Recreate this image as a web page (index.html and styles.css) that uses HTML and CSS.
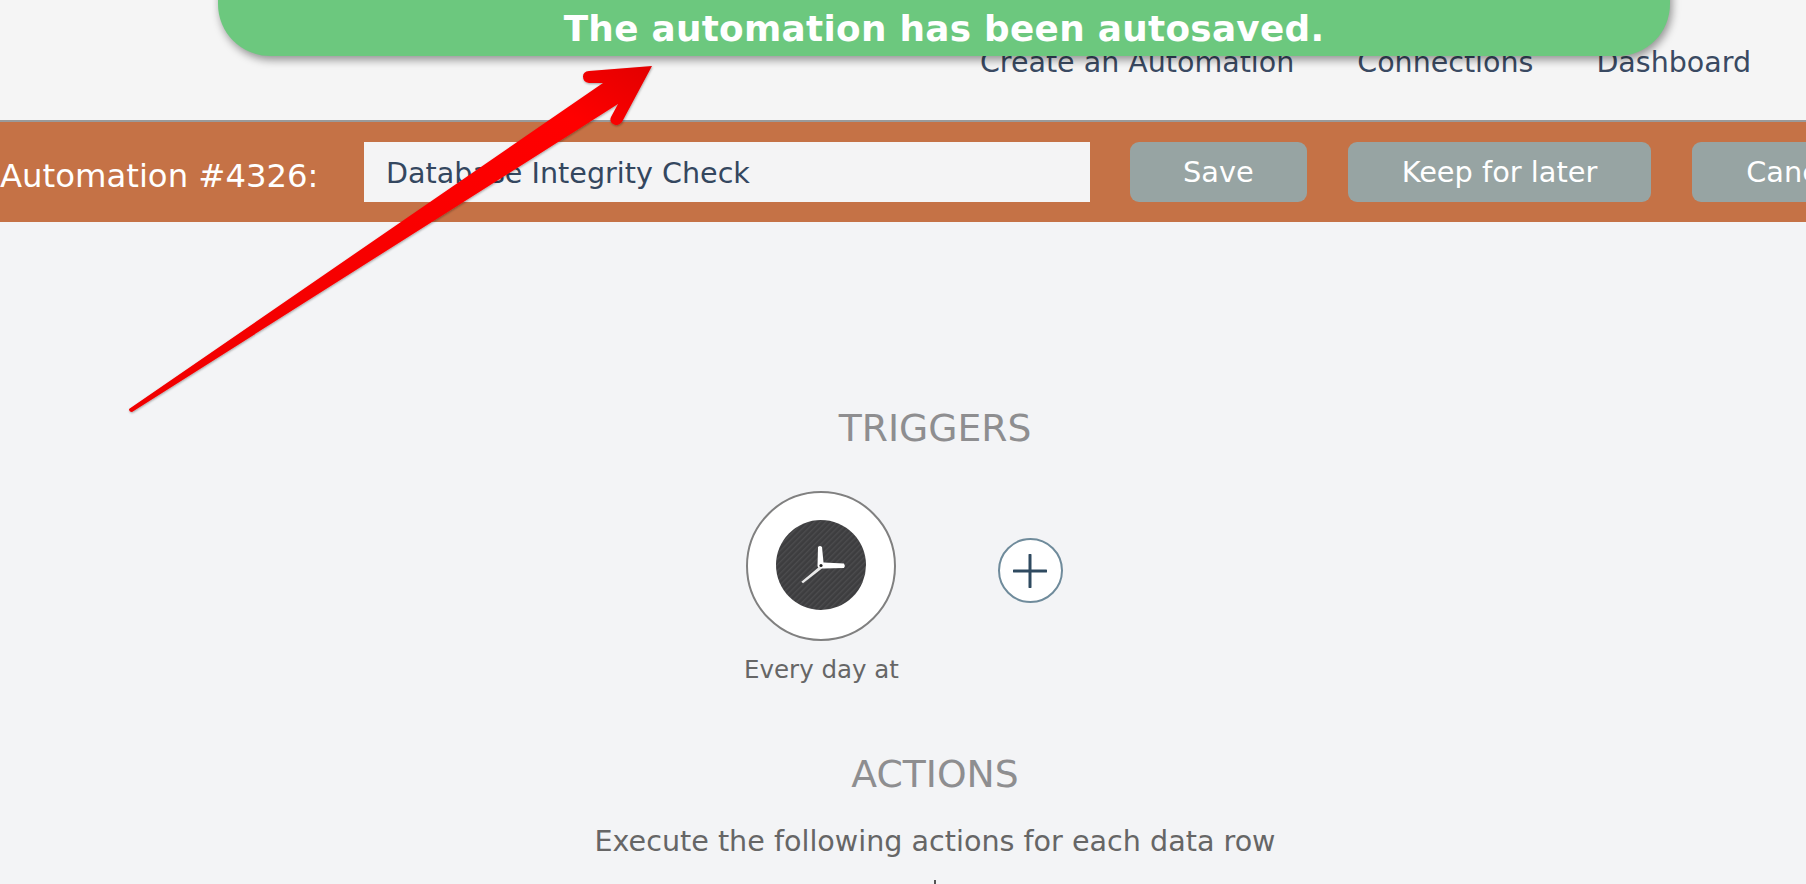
FILE: index.html
```html
<!DOCTYPE html>
<html lang="en">
<head>
  <meta charset="UTF-8" />
  <title>Automation #4326</title>
  <link rel="stylesheet" href="styles.css">
</head>
<body>
  <div class="toast">The automation has been autosaved.</div>

  <header class="topnav">
    <a href="#">Create an Automation</a>
    <a href="#">Connections</a>
    <a href="#">Dashboard</a>
  </header>

  <section class="namebar">
    <label class="namebar-label" for="name">Automation #4326:</label>
    <input class="namebar-input" id="name" type="text" value="Database Integrity Check" />
    <button class="btn btn-save">Save</button>
    <button class="btn btn-keep">Keep for later</button>
    <button class="btn btn-cancel">Cancel</button>
  </section>

  <main class="canvas">
    <h2 class="heading heading-triggers">TRIGGERS</h2>

    <div class="trigger-row">
      <div class="trigger">
        <div class="trigger-ring">
          <svg class="clock" width="90" height="90" viewBox="0 0 90 90">
            <defs>
              <pattern id="stripes" width="4" height="4" patternUnits="userSpaceOnUse" patternTransform="rotate(-45)">
                <rect width="4" height="4" fill="#3d3d3f" />
                <rect width="4" height="1.4" fill="#4c4c4e" />
              </pattern>
            </defs>
            <circle cx="45" cy="45" r="45" fill="url(#stripes)" />
            <path d="M41.500 46 L42 27 Q44 25 46 27 L47.500 42.500 L68 43.500 Q69.500 45.500 68 48 L47 48.500 Q42 49 41.500 46 Z" fill="#fff" />
            <path d="M43.500 46.500 L46 48.500 L27 63.300 L25.300 61.700 Z" fill="#e9e9e9" />
            <circle cx="45" cy="45.500" r="1.600" fill="#222" />
          </svg>
        </div>
        <div class="trigger-caption">Every day at</div>
      </div>
      <button class="add-trigger" aria-label="Add trigger">
        <svg width="34" height="34" viewBox="0 0 34 34">
          <path d="M17 1 V33 M1 17 H33" stroke="#2f4a60" stroke-width="3" stroke-linecap="round" fill="none" />
        </svg>
      </button>
    </div>

    <h2 class="heading heading-actions">ACTIONS</h2>
    <p class="actions-note">Execute the following actions for each data row</p>
    <div class="connector"></div>
  </main>

  <!-- annotation drawn over the screenshot -->
  <svg class="arrow" width="1806" height="884" viewBox="0 0 1806 884">
    <defs>
      <linearGradient id="arrowfill" x1="0" y1="1" x2="1" y2="0">
        <stop offset="0" stop-color="#f00000" />
        <stop offset="0.85" stop-color="#ff0000" />
        <stop offset="1" stop-color="#e20000" />
      </linearGradient>
      <filter id="arrowshadow" x="-5%" y="-5%" width="110%" height="110%">
        <feDropShadow dx="0.5" dy="1" stdDeviation="0.8" flood-color="#000" flood-opacity="0.35" />
      </filter>
    </defs>
    <path filter="url(#arrowshadow)" fill="url(#arrowfill)" d="M129 409 L603 83 L589 83 Q583 82 583 76.500 Q583 71.500 589 71 L652 66 L622 122 Q618 127 613 124 Q609 122 611 117 L618 104 L132 412 Q129 412 129 409 Z" />
  </svg>
</body>
</html>
```

FILE: styles.css
```css
html, body { margin: 0; height: 884px; overflow: hidden; }
body { width: 1806px; background: #f3f4f6; font-family: "DejaVu Sans", sans-serif; position: relative; }

.toast {
  position: absolute; top: -30px; left: 218px; width: 1452px; height: 86px;
  box-sizing: border-box; padding: 30px 0 0 0;
  background: #6cc87e; color: #fff; font-size: 35.800px; font-weight: bold; line-height: 58px;
  letter-spacing: 0.300px; text-align: center; border-radius: 0 0 52px 52px;
  box-shadow: 2px 4px 8px rgba(0, 0, 0, 0.4);
}

.topnav {
  width: 1806px; height: 120px; box-sizing: border-box; padding: 45px 55px 0 0;
  display: flex; justify-content: flex-end; gap: 63px;
  background: #f5f5f5;
}
.topnav a { color: #3a4a62; font-size: 28.500px; line-height: 36px; text-decoration: none; }

.namebar {
  width: 1806px; height: 102px; box-sizing: border-box; padding: 20px 0 0 0;
  display: flex; align-items: flex-start; overflow: hidden;
  background: #c57246; border-top: 2px solid #9a9a9a;
}
.namebar-label { width: 364px; flex: none; color: #fff; font-size: 32.300px; line-height: 68px; white-space: nowrap; }
.namebar-input {
  width: 726px; height: 60px; flex: none; box-sizing: border-box; border: 0; padding: 2px 22px 0;
  background: #f4f4f5; color: #34475f; font-family: inherit; font-size: 28.600px;
}
.btn {
  height: 60px; flex: none; border: 0; border-radius: 9px; padding: 0 53px;
  background: #97a4a3; color: #fff; font-family: inherit; font-size: 28.800px;
}
.btn-save { margin-left: 40px; }
.btn-keep { margin-left: 41px; padding: 0 54px; }
.btn-cancel { margin-left: 41px; padding: 0 54px; }

/* the section below is wider than the window, so its middle sits right of centre */
.canvas { width: 1870px; display: flex; flex-direction: column; align-items: center; }
.heading { margin: 0; color: #8e8e90; font-size: 37.700px; font-weight: normal; line-height: 44px; }
.heading-triggers { margin-top: 184px; }

.trigger-row {
  width: 1806px; align-self: flex-start; margin-top: 41px;
  display: flex; justify-content: center; align-items: flex-start; gap: 100px;
}
.trigger { width: 154px; display: flex; flex-direction: column; align-items: center; }
.trigger-ring {
  width: 150px; height: 150px; box-sizing: border-box; border: 2px solid #808080; border-radius: 50%;
  background: #fff; display: flex; align-items: center; justify-content: center;
}
.clock { display: block; margin-bottom: 3px; }
.trigger-caption { margin-top: 13px; padding-left: 2px; color: #666; font-size: 24.500px; line-height: 32px; white-space: nowrap; }
.add-trigger {
  width: 65px; height: 65px; flex: none; margin-top: 47px; padding: 0; box-sizing: border-box;
  border: 2px solid #6f8b9b; border-radius: 50%; background: #fff;
  display: flex; align-items: center; justify-content: center;
}

.heading-actions { margin-top: 66px; }
.actions-note { margin: 25px 0 0; color: #666; font-size: 28.600px; line-height: 40px; white-space: nowrap; }
.connector { width: 2px; height: 10px; margin-top: 19px; background: #555; }

.arrow { position: absolute; top: 0; left: 0; pointer-events: none; }
```
